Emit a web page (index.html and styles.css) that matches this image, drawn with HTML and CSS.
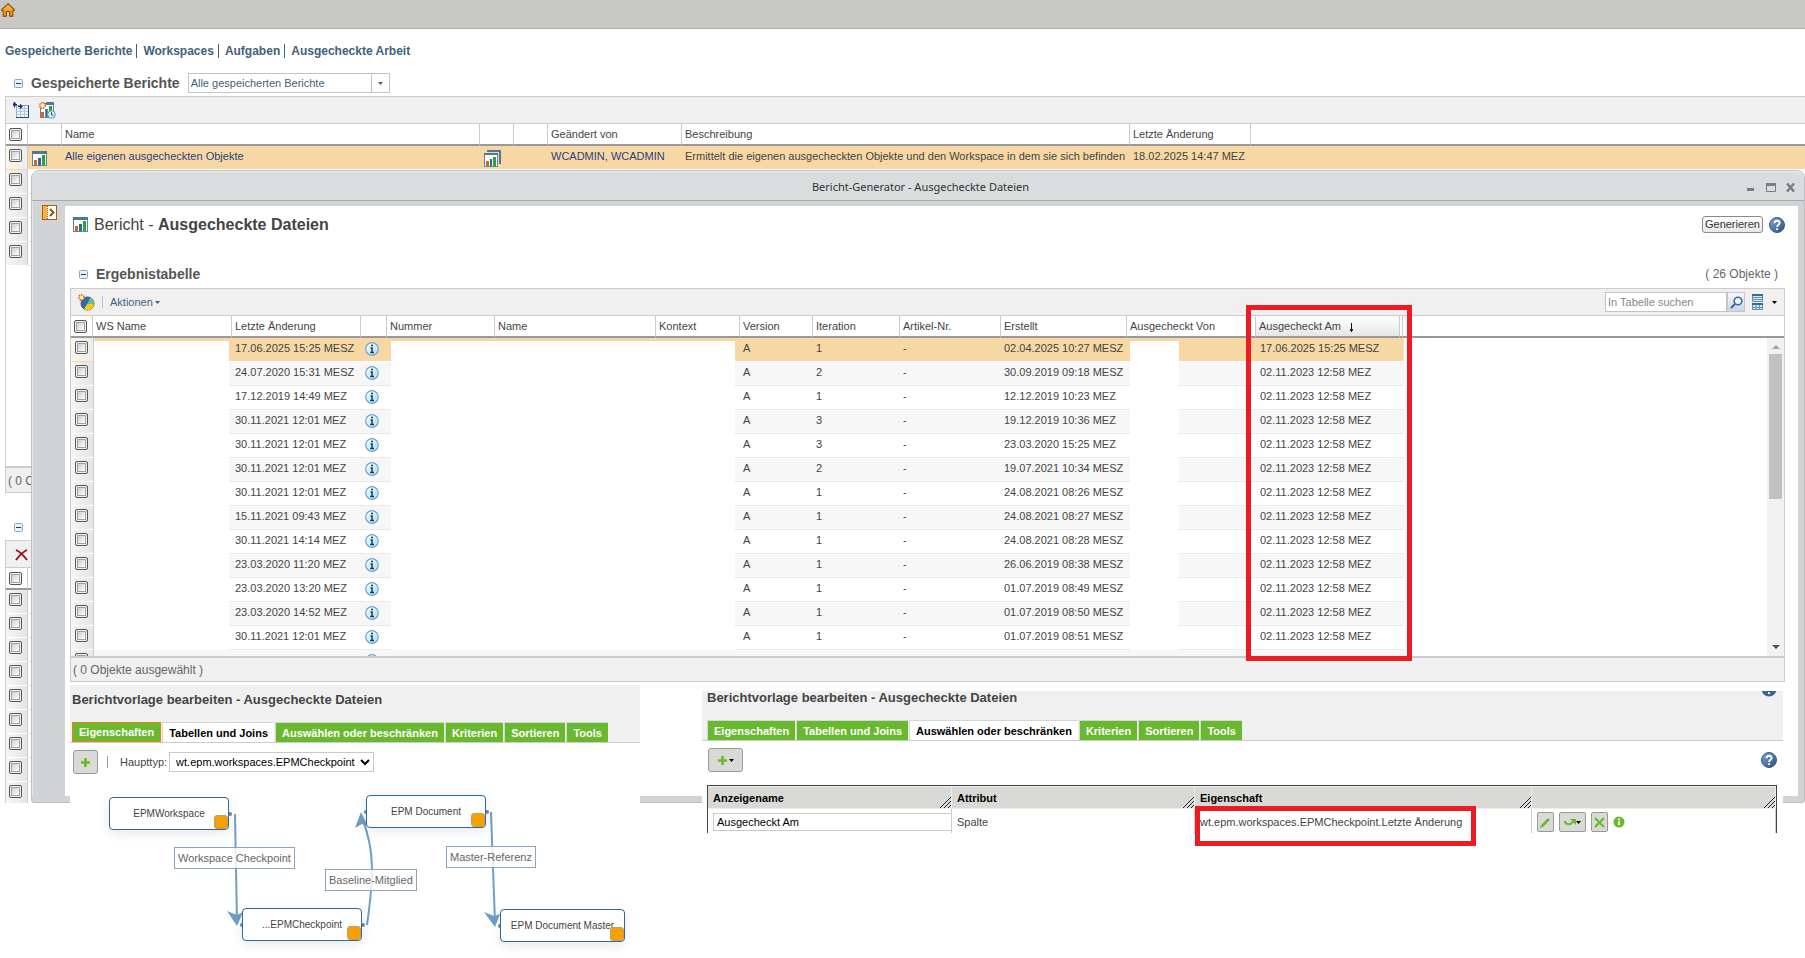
FILE: index.html
```html
<!DOCTYPE html>
<html lang="de">
<head>
    <meta charset="UTF-8">
    <meta name="viewport" content="width=device-width, initial-scale=1.0">
    <title>Bericht-Generator - Ausgecheckte Dateien</title>
    <link rel="stylesheet" href="styles.css">
</head>
<body>
    <!-- shared icons -->
    <svg class="sprite" aria-hidden="true">
        <defs>
            <linearGradient id="blue-ball" x1="0" y1="0" x2="1" y2="1">
                <stop offset="0" stop-color="#7fa8cf"/>
                <stop offset="1" stop-color="#2a4f80"/>
            </linearGradient>
            <linearGradient id="pale-ball" x1="0" y1="0" x2="1" y2="1">
                <stop offset="0" stop-color="#ffffff"/>
                <stop offset="1" stop-color="#a9dcfa"/>
            </linearGradient>
            <linearGradient id="home-fill" x1="0" y1="0" x2="0" y2="1">
                <stop offset="0" stop-color="#ffc04a"/>
                <stop offset="1" stop-color="#f08a10"/>
            </linearGradient>
        </defs>
        <symbol id="i-report" viewBox="0 0 15 15">
            <rect x=".5" y=".5" width="14" height="14" fill="#fff" stroke="#5f87a3"/>
            <rect width="15" height="3" fill="#4d7896"/>
            <rect x="2" y="9" width="3" height="5" fill="#d2691e"/>
            <rect x="6" y="7" width="3" height="7" fill="#2b6a94"/>
            <rect x="10" y="4" width="3" height="10" fill="#25a82b"/>
        </symbol>
        <symbol id="i-reports" viewBox="0 0 17 17">
            <path d="M3 1h13v13" fill="none" stroke="#4d7896" stroke-width="2"/>
            <rect x=".5" y="3.500" width="13" height="13" fill="#fff" stroke="#5f87a3"/>
            <rect y="3" width="14" height="2" fill="#4d7896"/>
            <rect x="2" y="11" width="3" height="5" fill="#d2691e"/>
            <rect x="6" y="9" width="2" height="7" fill="#2b6a94"/>
            <rect x="9" y="7" width="3" height="9" fill="#25a82b"/>
        </symbol>
        <symbol id="i-minus" viewBox="0 0 9 9">
            <rect x=".5" y=".5" width="8" height="8" rx="1" fill="#e6f3fc" stroke="#82aac8"/>
            <path d="M2 4.500h5" stroke="#1d3f5e"/>
        </symbol>
        <symbol id="i-help" viewBox="0 0 16 16">
            <circle cx="8" cy="8" r="7.500" fill="url(#blue-ball)" stroke="#34588a"/>
            <path d="M5.500 6.200C5.500 3 10.600 3 10.600 6c0 1.800-2.500 1.900-2.500 4M8.100 11.300v1.800" fill="none" stroke="#fff" stroke-width="1.900"/>
        </symbol>
        <symbol id="i-info" viewBox="0 0 14 14">
            <circle cx="7" cy="7" r="6.300" fill="url(#pale-ball)" stroke="#6ea6cc" stroke-width="1.200"/>
            <path d="M6 3.500h2M5.500 6H7v4.500M5.200 10.500h3.800" fill="none" stroke="#133a5c" stroke-width="1.500"/>
        </symbol>
        <symbol id="i-down" viewBox="0 0 5 3">
            <path d="M0 0h5L2.500 3z" fill="currentColor"/>
        </symbol>
        <symbol id="i-plus" viewBox="0 0 9 9">
            <path d="M4.500 0v9M0 4.500h9" stroke="#69b92e" stroke-width="2.600"/>
        </symbol>
        <symbol id="i-grip" viewBox="0 0 11 11">
            <path d="M0 11L11 0M4 11l7-7M8 11l3-3" stroke="#222" fill="none"/>
        </symbol>
    </svg>

    <header class="topbar">
        <a href="#" class="home" aria-label="Startseite">
            <svg width="14" height="14" viewBox="0 0 14 14"><path d="M7 .8L.8 6.500v1.300h1.400v5.500h3.100V8.500h3.400v4.800h3.100V7.800h1.400V6.500z" fill="url(#home-fill)" stroke="#8a4a08" stroke-width="1.100"/></svg>
        </a>
    </header>

    <main class="page">
        <nav class="links">
            <a href="#">Gespeicherte Berichte</a>
            <a href="#">Workspaces</a>
            <a href="#">Aufgaben</a>
            <a href="#">Ausgecheckte Arbeit</a>
        </nav>

        <div class="section-head">
            <svg class="minus"><use href="#i-minus"/></svg>
            <h2>Gespeicherte Berichte</h2>
            <div class="combo">
                <select aria-label="Ansicht">
                    <option>Alle gespeicherten Berichte</option>
                </select>
                <span class="combo-arrow"><svg class="down"><use href="#i-down"/></svg></span>
            </div>
        </div>

        <section class="list">
            <div class="toolbar">
                <button class="icon-btn" aria-label="Aktualisieren">
                    <svg width="16" height="16" viewBox="0 0 16 16">
                        <rect x="3.500" y="3.500" width="12" height="12" fill="#eef4fc" stroke="#8aa4c8"/>
                        <path d="M3 6.500h12M3 9.500h12M3 12.500h12M7.500 4v11M11.500 4v11" stroke="#b4c8e2"/>
                        <path d="M4 2.500H1.500v3M0 3.500l1.500-3 1.500 3M5 4.500h3.500M7 2.500l2 2-2 2" stroke="#14246e" stroke-width="1.200" fill="none"/>
                        <path d="M15.500 3v13M3 15.500h13" stroke="#2d4a78"/>
                    </svg>
                </button>
                <button class="icon-btn" aria-label="Neuer Bericht">
                    <svg width="17" height="17" viewBox="0 0 17 17">
                        <rect x="1.500" y="1.500" width="13" height="14" fill="#fff" stroke="#5f87a3"/>
                        <path d="M7 1.500h8" stroke="#4d7896" stroke-width="3"/>
                        <path d="M3.500 10v5" stroke="#d2691e" stroke-width="3"/>
                        <path d="M7.500 7v8" stroke="#2b6a94" stroke-width="2.500"/>
                        <path d="M11.500 4v7" stroke="#25a82b" stroke-width="3"/>
                        <circle cx="3.500" cy="3.500" r="2.800" fill="#fff3b0" stroke="#e8501e" stroke-width="1.600" stroke-dasharray="1.300 1"/>
                        <circle cx="12.500" cy="12.500" r="3.800" fill="#d8eefa" stroke="#5f93b8"/>
                        <path d="M12.500 10v3h2" fill="none" stroke="#2b5a80"/>
                    </svg>
                </button>
            </div>
            <table class="grid report-grid">
                <colgroup><col class="w22"><col class="w34"><col class="w418"><col class="w34"><col class="w34"><col class="w134"><col class="w448"><col class="w121"><col></colgroup>
                <thead>
                    <tr>
                        <th><input type="checkbox" aria-label="Alle auswählen"></th>
                        <th></th>
                        <th>Name</th>
                        <th></th>
                        <th></th>
                        <th>Geändert von</th>
                        <th>Beschreibung</th>
                        <th>Letzte Änderung</th>
                        <th></th>
                    </tr>
                </thead>
                <tbody>
                    <tr class="selected">
                        <td class="check"><input type="checkbox" aria-label="Zeile auswählen"></td>
                        <td class="icon"><svg width="15" height="15"><use href="#i-report"/></svg></td>
                        <td><a href="#">Alle eigenen ausgecheckten Objekte</a></td>
                        <td class="icon"><svg width="17" height="17"><use href="#i-reports"/></svg></td>
                        <td></td>
                        <td><a href="#">WCADMIN, WCADMIN</a></td>
                        <td>Ermittelt die eigenen ausgecheckten Objekte und den Workspace in dem sie sich befinden</td>
                        <td>18.02.2025 14:47 MEZ</td>
                        <td></td>
                    </tr>
                    <tr><td class="check"><input type="checkbox" aria-label="Zeile auswählen"></td><td colspan="8"></td></tr>
                    <tr><td class="check"><input type="checkbox" aria-label="Zeile auswählen"></td><td colspan="8"></td></tr>
                    <tr><td class="check"><input type="checkbox" aria-label="Zeile auswählen"></td><td colspan="8"></td></tr>
                    <tr><td class="check"><input type="checkbox" aria-label="Zeile auswählen"></td><td colspan="8"></td></tr>
                </tbody>
            </table>
            <div class="list-space"></div>
            <div class="list-foot">( 0 O</div>
        </section>

        <div class="section-head second">
            <svg class="minus"><use href="#i-minus"/></svg>
        </div>

        <section class="list">
            <div class="toolbar delete-bar">
                <button class="icon-btn" aria-label="Löschen">
                    <svg width="14" height="12" viewBox="0 0 14 12"><path d="M1 1c4 2 8 6 11 10M12 1C8 3 4 7 1 11" stroke="#9a0a0a" stroke-width="1.800" fill="none"/></svg>
                </button>
            </div>
            <div class="clipped">
                <table class="grid">
                    <colgroup><col class="w22"><col></colgroup>
                    <thead>
                        <tr><th><input type="checkbox" aria-label="Alle auswählen"></th><th></th></tr>
                    </thead>
                    <tbody id="work-rows"></tbody>
                </table>
            </div>
        </section>
    </main>

    <section class="window">
        <header class="window-bar">
            <h1>Bericht-Generator - Ausgecheckte Dateien</h1>
            <div class="window-btns">
                <button class="icon-btn" aria-label="Minimieren"><svg width="10" height="9" viewBox="0 0 10 9"><path d="M1 6.500h7" stroke="#7a7c80" stroke-width="3"/></svg></button>
                <button class="icon-btn" aria-label="Maximieren"><svg width="10" height="9" viewBox="0 0 10 9"><path d="M.5 1v7.500h9V1" fill="none" stroke="#7a7c80"/><path d="M0 1.500h10" stroke="#7a7c80" stroke-width="3"/></svg></button>
                <button class="icon-btn" aria-label="Schließen"><svg width="9" height="9" viewBox="0 0 9 9"><path d="M1 .5l7 8M8 .5l-7 8" stroke="#7a7c80" stroke-width="2.400"/></svg></button>
            </div>
        </header>

        <div class="window-body">
            <aside class="rail">
                <button class="icon-btn" aria-label="Navigator öffnen">
                    <svg width="15" height="15" viewBox="0 0 15 15">
                        <rect x=".5" y=".5" width="14" height="14" fill="#fff" stroke="#a85a10"/>
                        <rect x="1" y="1" width="4" height="13" fill="#fbb040"/>
                        <path d="M5.500 1v13" stroke="#a85a10" stroke-dasharray="1 1"/>
                        <path d="M8 4l3.500 3.500L8 11" fill="none" stroke="#8a4a08" stroke-width="1.800"/>
                    </svg>
                </button>
            </aside>

            <div class="content">
                <div class="content-head">
                    <svg width="15" height="15"><use href="#i-report"/></svg>
                    <h2>Bericht - <b>Ausgecheckte Dateien</b></h2>
                    <button class="generate">Generieren</button>
                    <svg width="16" height="16"><use href="#i-help"/></svg>
                </div>

                <div class="result-head">
                    <svg class="minus"><use href="#i-minus"/></svg>
                    <h3>Ergebnistabelle</h3>
                    <span class="count">( 26 Objekte )</span>
                </div>

                <div class="result">
                    <div class="toolbar">
                        <button class="icon-btn" aria-label="Diagramm">
                            <svg width="17" height="17" viewBox="0 0 17 17">
                                <circle cx="9.500" cy="9.500" r="6.500" fill="#2a68b8" stroke="#4a5a50"/>
                                <path d="M9.500 9.500L12 3.500a6.500 6.500 0 0 1 4 6z" fill="#5cc49a"/>
                                <path d="M9.500 9.500H16a6.500 6.500 0 0 1-10 5.500z" fill="#f2cc10"/>
                                <circle cx="3.500" cy="3.500" r="2.600" fill="#fff3b0" stroke="#e0501e" stroke-width="1.600" stroke-dasharray="1.300 1"/>
                            </svg>
                        </button>
                        <span class="sep"></span>
                        <button class="menu">Aktionen<svg class="down"><use href="#i-down"/></svg></button>
                        <div class="search">
                            <input type="text" placeholder="In Tabelle suchen" aria-label="In Tabelle suchen">
                            <button aria-label="Suchen"><svg width="13" height="13" viewBox="0 0 13 13"><circle cx="8" cy="5" r="3.800" fill="#f4f9ff" stroke="#3c68a8" stroke-width="1.600"/><path d="M5 8L1 12" stroke="#3c68a8" stroke-width="2.200"/></svg></button>
                        </div>
                        <button class="view-btn" aria-label="Tabellenansicht">
                            <svg width="11" height="16" viewBox="0 0 11 16">
                                <path d="M.5 1v6.500h10V1M.5 3.500h10M.5 5.500h10M.5 10v5.500h10V10M4 10v5.500M7.500 10v5.500M.5 13.500h10" fill="#d5ebf8" stroke="#5b8fb5"/>
                                <path d="M0 1h11M0 10h11" stroke="#3d6a8c" stroke-width="2"/>
                            </svg>
                            <svg class="down"><use href="#i-down"/></svg>
                        </button>
                    </div>

                    <table class="grid">
                        <colgroup><col class="w22"><col class="w139"><col class="w129"><col class="w26"><col class="w108"><col class="w161"><col class="w84"><col class="w73"><col class="w87"><col class="w101"><col class="w126"><col class="w129"><col class="w144"><col class="w3"><col></colgroup>
                        <thead>
                            <tr>
                                <th><input type="checkbox" aria-label="Alle auswählen"></th>
                                <th>WS Name</th>
                                <th>Letzte Änderung</th>
                                <th></th>
                                <th>Nummer</th>
                                <th>Name</th>
                                <th>Kontext</th>
                                <th>Version</th>
                                <th>Iteration</th>
                                <th>Artikel-Nr.</th>
                                <th>Erstellt</th>
                                <th>Ausgecheckt Von</th>
                                <th class="sorted">Ausgecheckt Am<svg width="5" height="9" viewBox="0 0 5 9"><path d="M2.500 0v9" stroke="#111"/><path d="M1 6h3v1L2.500 9 1 7z" fill="#111"/></svg></th>
                                <th></th>
                                <th></th>
                            </tr>
                        </thead>
                    </table>

                    <div class="viewport">
                        <table class="grid result-grid">
                            <colgroup><col class="w23"><col class="w135"><col class="w132"><col class="w30"><col class="w344"><col class="w75"><col class="w87"><col class="w101"><col class="w132"><col class="w49"><col class="w75"><col class="w150"><col></colgroup>
                            <tbody id="result-rows"></tbody>
                        </table>
                        <div class="scrollbar">
                            <svg width="8" height="4" viewBox="0 0 8 4"><path d="M0 4h8L4 0z" fill="#a3a3a3"/></svg>
                            <span class="thumb"></span>
                            <svg width="8" height="4" viewBox="0 0 8 4"><path d="M0 0h8L4 4z" fill="#505050"/></svg>
                        </div>
                    </div>
                    <div class="result-foot">( 0 Objekte ausgewählt )</div>
                </div>

                <div class="panels">
                    <section class="panel joins">
                        <div class="panel-head">
                            <h3>Berichtvorlage bearbeiten - Ausgecheckte Dateien</h3>
                            <div class="tabs">
                                <button class="focus">Eigenschaften</button>
                                <button class="active">Tabellen und Joins</button>
                                <button>Auswählen oder beschränken</button>
                                <button>Kriterien</button>
                                <button>Sortieren</button>
                                <button>Tools</button>
                            </div>
                        </div>
                        <div class="panel-tools">
                            <button class="add" aria-label="Hinzufügen"><svg width="9" height="9"><use href="#i-plus"/></svg></button>
                            <span class="sep"></span>
                            <label for="main-type">Haupttyp:</label>
                            <select id="main-type">
                                <option>wt.epm.workspaces.EPMCheckpoint</option>
                            </select>
                        </div>
                        <div class="canvas">
                            <svg class="edges" width="570" height="170">
                                <g fill="none" stroke="#6f9fc6" stroke-width="2">
                                    <path d="M165 32L167 140"/>
                                    <path d="M297 143C303 100 306 70 292 36"/>
                                    <path d="M421 30L425 141"/>
                                </g>
                                <g fill="#6f9fc6">
                                    <path d="M167 144L157 129l10 4 6-3z"/>
                                    <path d="M291 30l-6 16 7-4 6 2z"/>
                                    <path d="M425 145l-11-15 10 4 6-2z"/>
                                </g>
                                <g fill="#7b8792">
                                    <circle cx="160" cy="32" r="2"/>
                                    <circle cx="172" cy="143" r="2"/>
                                    <circle cx="293" cy="143" r="2"/>
                                    <circle cx="296" cy="30" r="2"/>
                                    <circle cx="417" cy="30" r="2"/>
                                    <circle cx="430" cy="144" r="2"/>
                                </g>
                            </svg>
                            <div class="node workspace">EPMWorkspace</div>
                            <div class="node document">EPM Document</div>
                            <div class="node checkpoint">...EPMCheckpoint</div>
                            <div class="node master">EPM Document Master</div>
                            <div class="join ws-cp">Workspace Checkpoint</div>
                            <div class="join base">Baseline-Mitglied</div>
                            <div class="join ref">Master-Referenz</div>
                        </div>
                    </section>

                    <section class="panel fields">
                        <div class="panel-head">
                            <div class="panel-title">
                                <h3>Berichtvorlage bearbeiten - Ausgecheckte Dateien</h3>
                                <svg class="help-cut" width="16" height="6" viewBox="0 10 16 6"><circle cx="8" cy="8" r="7.500" fill="#3c6296"/><path d="M8 11.300v1.800" stroke="#fff" stroke-width="2"/></svg>
                            </div>
                            <div class="tabs">
                                <button>Eigenschaften</button>
                                <button>Tabellen und Joins</button>
                                <button class="active">Auswählen oder beschränken</button>
                                <button>Kriterien</button>
                                <button>Sortieren</button>
                                <button>Tools</button>
                            </div>
                        </div>
                        <div class="panel-tools">
                            <button class="add wide" aria-label="Hinzufügen"><svg width="9" height="9"><use href="#i-plus"/></svg><svg class="down"><use href="#i-down"/></svg></button>
                            <svg class="help" width="16" height="16"><use href="#i-help"/></svg>
                        </div>
                        <table class="attr">
                            <colgroup><col class="w244"><col class="w243"><col class="w337"><col></colgroup>
                            <thead>
                                <tr>
                                    <th>Anzeigename<svg class="grip"><use href="#i-grip"/></svg></th>
                                    <th>Attribut<svg class="grip"><use href="#i-grip"/></svg></th>
                                    <th>Eigenschaft<svg class="grip"><use href="#i-grip"/></svg></th>
                                    <th><svg class="grip"><use href="#i-grip"/></svg></th>
                                </tr>
                            </thead>
                            <tbody>
                                <tr>
                                    <td class="field"><input type="text" value="Ausgecheckt Am" aria-label="Anzeigename"></td>
                                    <td>Spalte</td>
                                    <td>wt.epm.workspaces.EPMCheckpoint.Letzte Änderung</td>
                                    <td>
                                        <div class="row-tools">
                                            <button aria-label="Bearbeiten"><svg width="11" height="11" viewBox="0 0 11 11"><path d="M2 9l7-7" stroke="#69b92e" stroke-width="2.600"/><path d="M0 11l1-3 2 2z" fill="#69b92e"/></svg></button>
                                            <button class="move" aria-label="Ersetzen"><svg width="12" height="8" viewBox="0 0 12 8"><path d="M1 3c0 4 6 4 8 1" fill="none" stroke="#69b92e" stroke-width="2"/><path d="M6 1h6v6z" fill="#69b92e"/></svg><svg class="down"><use href="#i-down"/></svg></button>
                                            <button aria-label="Entfernen"><svg width="11" height="11" viewBox="0 0 11 11"><path d="M1 1l9 9M10 1l-9 9" stroke="#69b92e" stroke-width="2.200"/></svg></button>
                                            <svg width="12" height="12" viewBox="0 0 12 12"><circle cx="6" cy="6" r="5.500" fill="#69b92e"/><path d="M6 2.500v1.500M6 5v4" stroke="#fff" stroke-width="1.800"/></svg>
                                        </div>
                                    </td>
                                </tr>
                            </tbody>
                        </table>
                    </section>
                </div>
            </div>
        </div>
    </section>

    <!-- red markers -->
    <div class="marker marker-column"></div>
    <div class="marker marker-property"></div>

    <script>
        const check = '<td class="check"><input type="checkbox" aria-label="Zeile auswählen"></td>';
        const info = '<svg width="14" height="14"><use href="#i-info"/></svg>';

        // changed, iteration, created
        const rows = [
            ['17.06.2025 15:25 MESZ', 1, '02.04.2025 10:27 MESZ', '17.06.2025 15:25 MESZ'],
            ['24.07.2020 15:31 MESZ', 2, '30.09.2019 09:18 MESZ'],
            ['17.12.2019 14:49 MEZ', 1, '12.12.2019 10:23 MEZ'],
            ['30.11.2021 12:01 MEZ', 3, '19.12.2019 10:36 MEZ'],
            ['30.11.2021 12:01 MEZ', 3, '23.03.2020 15:25 MEZ'],
            ['30.11.2021 12:01 MEZ', 2, '19.07.2021 10:34 MESZ'],
            ['30.11.2021 12:01 MEZ', 1, '24.08.2021 08:26 MESZ'],
            ['15.11.2021 09:43 MEZ', 1, '24.08.2021 08:27 MESZ'],
            ['30.11.2021 14:14 MEZ', 1, '24.08.2021 08:28 MESZ'],
            ['23.03.2020 11:20 MEZ', 1, '26.06.2019 08:38 MESZ'],
            ['23.03.2020 13:20 MEZ', 1, '01.07.2019 08:49 MESZ'],
            ['23.03.2020 14:52 MEZ', 1, '01.07.2019 08:50 MESZ'],
            ['30.11.2021 12:01 MEZ', 1, '01.07.2019 08:51 MESZ']
        ];

        document.getElementById('result-rows').innerHTML = rows.map(([changed, iteration, created, out], i) => `
            <tr${i === 0 ? ' class="selected"' : ''}>
                ${check}<td class="blank"></td><td>${changed}</td><td class="info">${info}</td><td class="blank"></td>
                <td class="version">A</td><td>${iteration}</td><td>-</td><td>${created}</td>
                <td class="blank"></td><td></td><td>${out || '02.11.2023 12:58 MEZ'}</td><td class="rest"></td>
            </tr>`).join('') + `<tr>${check}<td colspan="2"></td><td class="info">${info}</td><td colspan="8"></td><td class="rest"></td></tr>`;

        document.getElementById('work-rows').innerHTML = `<tr>${check}<td></td></tr>`.repeat(9);
    </script>
</body>
</html>
```

FILE: styles.css
```css
* {
    margin: 0;
    padding: 0;
    box-sizing: border-box;
}

body {
    position: relative;
    min-height: 100vh;
    background: #fff;
    color: #444;
    font-family: 'Liberation Sans', Arial, sans-serif;
    font-size: 11px;
    line-height: 14px;
    overflow: hidden;
}

a {
    color: #2c3f7c;
    text-decoration: none;
}

button, input, select {
    font: inherit;
    color: inherit;
}

svg {
    display: block;
    flex: none;
}

.sprite {
    position: absolute;
    width: 0;
    height: 0;
}

.icon-btn {
    background: none;
    border: 0;
}

.minus {
    width: 9px;
    height: 9px;
}

.down {
    width: 5px;
    height: 3px;
}

/* page behind the window */
.topbar {
    height: 29px;
    padding: 3px 1px;
    background: #c8c8c5;
    border-bottom: 1px solid #adadad;
}

.home {
    display: inline-block;
}

.page {
    padding-left: 5px;
}

.links {
    display: flex;
    padding-top: 15px;
    font-size: 12px;
    font-weight: bold;
}

.links a {
    color: #42617a;
    padding: 0 4px 0 6px;
    border-left: 1px solid #42617a;
}

.links a:first-child {
    padding: 0 4px 0 0;
    border-left: 0;
}

.section-head {
    display: flex;
    align-items: center;
    gap: 8px;
    height: 38px;
    padding: 12px 0 0 9px;
}

.section-head.second {
    height: 47px;
    padding-top: 21px;
}

h2, h3 {
    color: #555;
    font-size: 14px;
}

.combo {
    position: relative;
    width: 202px;
    height: 20px;
}

.combo select {
    width: 100%;
    height: 100%;
    padding-left: 2px;
    appearance: none;
    background: #fff;
    border: 1px solid #c4c4c4;
    color: #42617a;
}

.combo-arrow {
    position: absolute;
    top: 1px;
    right: 1px;
    display: grid;
    place-items: center;
    width: 18px;
    height: 18px;
    border-left: 1px solid #c4c4c4;
    color: #42617a;
    pointer-events: none;
}

.list, .result {
    border-left: 1px solid #ccc;
}

.toolbar {
    display: flex;
    align-items: center;
    gap: 10px;
    height: 28px;
    padding: 0 7px;
    background: #f0f0f0;
    border: solid #ccc;
    border-width: 1px 0;
}

.delete-bar {
    padding: 2px 9px 0;
}

.list-space {
    height: 200px;
}

.list-foot {
    height: 27px;
    padding: 6px 2px;
    background: #f0f0f0;
    border-top: 2px solid #ccc;
    border-bottom: 1px solid #ccc;
    color: #666;
    font-size: 12px;
}

.clipped {
    height: 235px;
    overflow: hidden;
}

/* tables */
table {
    width: 100%;
    table-layout: fixed;
    border-collapse: separate;
    border-spacing: 0;
}

.w3 { width: 3px; }
.w22 { width: 22px; }
.w23 { width: 23px; }
.w26 { width: 26px; }
.w30 { width: 30px; }
.w34 { width: 34px; }
.w49 { width: 49px; }
.w73 { width: 73px; }
.w75 { width: 75px; }
.w84 { width: 84px; }
.w87 { width: 87px; }
.w101 { width: 101px; }
.w108 { width: 108px; }
.w121 { width: 121px; }
.w126 { width: 126px; }
.w129 { width: 129px; }
.w132 { width: 132px; }
.w134 { width: 134px; }
.w135 { width: 135px; }
.w139 { width: 139px; }
.w144 { width: 144px; }
.w150 { width: 150px; }
.w161 { width: 161px; }
.w243 { width: 243px; }
.w244 { width: 244px; }
.w337 { width: 337px; }
.w344 { width: 344px; }
.w418 { width: 418px; }
.w448 { width: 448px; }

.grid th {
    height: 22px;
    padding: 0 3px;
    border-right: 1px solid #ccc;
    border-bottom: 2px solid #999;
    font-weight: normal;
    text-align: left;
    white-space: nowrap;
}

.grid th:last-child {
    border-right: 0;
}

.grid .sorted {
    background: linear-gradient(#fff, #e6e6e6);
}

.sorted svg {
    display: inline-block;
    margin-left: 8px;
    vertical-align: -2px;
}

.grid td {
    height: 24px;
    padding: 0 3px 4px;
    border-bottom: 1px solid #e9e9e9;
    white-space: nowrap;
}

.grid .check {
    background: linear-gradient(90deg, #f6f6f6, #e4e5e8);
    border-right: 1px solid #ccc;
    border-bottom-color: #fff;
}

.grid .selected td {
    background: #f7d8a4;
    border-bottom-color: #fff;
}

.grid .selected .check {
    background: linear-gradient(90deg, #fdf6ea, #ececee);
    border-bottom-color: #f7d8a4;
}

.grid .icon {
    padding: 2px 4px 0;
}

input[type="checkbox"] {
    display: block;
    width: 13px;
    height: 13px;
    appearance: none;
    background: linear-gradient(135deg, #c0c0c0, #fff 80%);
    border: 1px solid #555;
    border-radius: 2px;
    box-shadow: inset 0 0 0 1px #f4f4f4, inset 0 0 0 2px #a0a0a0;
}

/* window */
.window {
    position: absolute;
    top: 170px;
    left: 31px;
    right: 0;
    height: 633px;
    background: #d1d3d5;
    border: 1px solid #bcbec0;
    border-radius: 8px 8px 3px 3px;
}

.window-bar {
    display: flex;
    align-items: center;
    height: 30px;
    padding: 2px 9px 0;
    background: #d9dddd;
    border-top: 1px solid #f0f2f2;
    border-bottom: 1px solid #a9abad;
    border-radius: 7px 7px 0 0;
}

.window-bar h1 {
    flex: 1;
    padding-left: 54px;
    color: #333;
    font-family: 'Noto Sans', 'Open Sans', sans-serif;
    font-size: 11px;
    font-weight: normal;
    text-align: center;
}

.window-btns {
    display: flex;
    gap: 10px;
}

.window-body {
    display: flex;
    height: 595px;
    padding: 5px 6px 0 0;
}

.rail {
    width: 33px;
    margin-top: -5px;
    padding: 4px 10px;
    box-shadow: inset 7px 0 0 -6px #e4e6e8;
}

.content {
    flex: 1;
    min-width: 0;
    padding: 0 13px 0 5px;
    background: #fff;
}

.content-head {
    display: flex;
    align-items: center;
    gap: 6px;
    height: 36px;
    padding: 1px 0 0 3px;
}

.content-head h2 {
    flex: 1;
    color: #444;
    font-size: 16px;
    font-weight: normal;
}

.generate {
    height: 17px;
    padding: 0 2px;
    background: linear-gradient(#fff, #e8e8ea);
    border: 1px solid #8a8a8a;
    border-radius: 3px;
    color: #333;
    line-height: 13px;
}

.result-head {
    display: flex;
    align-items: center;
    gap: 8px;
    height: 46px;
    padding: 18px 7px 0 9px;
}

.result-head h3 {
    flex: 1;
}

.count {
    color: #666;
    font-size: 12px;
}

.result {
    border-right: 1px solid #ccc;
}

.result .toolbar {
    gap: 7px;
}

.sep {
    width: 1px;
    height: 12px;
    background: #a9c6ee;
}

.menu {
    display: flex;
    align-items: center;
    gap: 2px;
    background: none;
    border: 0;
    color: #42617a;
}

.search {
    display: flex;
    margin-left: auto;
}

.search input {
    width: 122px;
    height: 20px;
    padding: 0 2px;
    background: #fff;
    border: 1px solid #c4c4c4;
    outline: 0;
}

.search input::placeholder {
    color: #888;
}

.search button {
    display: grid;
    place-items: center;
    width: 18px;
    height: 20px;
    background: linear-gradient(#f6f8fb, #cfd3de);
    border: 1px solid #c0c6d8;
}

.view-btn {
    display: flex;
    align-items: center;
    gap: 9px;
    background: none;
    border: 0;
    color: #000;
}

.viewport {
    display: flex;
    height: 318px;
    overflow: hidden;
}

.result-grid {
    flex: 1;
    width: 0;
}

.result-grid td {
    padding-left: 6px;
}

.result-grid td.check {
    padding-left: 4px;
}

.result-grid tr:nth-child(even) td {
    background: #f7f7f7;
}

.result-grid tr:nth-child(even) td.check {
    background: linear-gradient(90deg, #f6f6f6, #e4e5e8);
}

.result-grid tr:nth-child(n) .blank {
    background: #fff;
    border-bottom-color: #fff;
}

.result-grid tr.selected .blank {
    background: linear-gradient(#f7d8a4 3px, #fff 3px);
}

.result-grid tr:nth-child(n) .rest {
    background: #fff;
    border-color: #fff;
}

.result-grid .info {
    padding: 0 4px 1px;
}

.result-grid .version {
    padding-left: 8px;
}

.scrollbar {
    display: flex;
    flex-direction: column;
    align-items: center;
    width: 17px;
    padding: 7px 0;
    background: #f1f1f1;
}

.scrollbar .thumb {
    width: 13px;
    height: 145px;
    margin: 5px 0 auto;
    background: #c1c1c1;
}

.result-foot {
    height: 26px;
    padding: 5px 2px;
    background: #f0f0f0;
    border-top: 2px solid #ccc;
    border-bottom: 1px solid #ccc;
    color: #666;
    font-size: 12px;
}

/* template editors */
.panels {
    display: flex;
    align-items: flex-start;
    gap: 62px;
    padding: 3px 2px 0 0;
}

.panel {
    background: #fff;
}

.joins {
    width: 570px;
}

.fields {
    flex: 1;
    min-width: 0;
    margin-top: 6px;
}

.panel-head {
    padding: 8px 0 0 2px;
    background: #f0f0f0;
    border-bottom: 1px solid #ccc;
}

.fields .panel-head {
    padding: 0 0 0 5px;
}

.panel-title {
    display: flex;
    justify-content: space-between;
    padding-right: 6px;
}

.panel-head h3 {
    color: #444;
    font-size: 13px;
}

.tabs {
    display: flex;
    gap: 1px;
    padding-top: 15px;
}

.tabs button {
    height: 20px;
    padding: 0 6px;
    background: #69b92e;
    border: 1px solid #d2d8d2;
    border-width: 1px 0 0 1px;
    color: #fff;
    font-weight: bold;
}

.tabs .focus {
    border: 1px solid #f08010;
}

.tabs .active {
    margin-bottom: -1px;
    background: #fff;
    color: #000;
}

.panel-tools {
    display: flex;
    align-items: center;
    padding: 7px 6px 8px 3px;
}

.fields .panel-tools {
    padding: 7px 6px 13px;
}

.add {
    display: flex;
    align-items: center;
    justify-content: center;
    gap: 2px;
    width: 25px;
    height: 24px;
    background: #d9dad5;
    border: 1px solid #999;
    border-radius: 3px;
    color: #000;
}

.add.wide {
    width: 35px;
}

.help {
    margin-left: auto;
}

.panel-tools .sep {
    margin: 0 12px 0 9px;
    background: #999;
}

#main-type {
    width: 205px;
    height: 20px;
    margin-left: 2px;
    padding-left: 2px;
    background: #fff;
    border: 1px solid #c8c8cc;
    color: #000;
}

.canvas {
    position: relative;
    height: 170px;
}

.edges {
    position: absolute;
    top: 0;
    left: 0;
}

.node {
    position: absolute;
    width: 120px;
    height: 33px;
    background: #fff;
    border: 1px solid #2e6a98;
    border-radius: 4px;
    box-shadow: 0 3px 12px rgba(0, 0, 0, 0.1);
    font-size: 10px;
    line-height: 32px;
    text-align: center;
}

.node::after {
    content: '';
    position: absolute;
    right: 0;
    bottom: 0;
    width: 12px;
    height: 12px;
    background: #f8a000;
    border: 1px solid #b8a070;
    border-radius: 3px;
}

.workspace { top: 15px; left: 39px; }
.document { top: 13px; left: 296px; }
.checkpoint { top: 126px; left: 172px; }
.master { top: 127px; left: 430px; width: 125px; }

.join {
    position: absolute;
    padding: 3px;
    background: rgba(255, 255, 255, 0.8);
    border: 1px solid #8aa4bc;
    color: #666;
}

.ws-cp { top: 65px; left: 104px; }
.base { top: 87px; left: 255px; }
.ref { top: 64px; left: 376px; }

.attr {
    width: auto;
    min-width: calc(100% - 11px);
    margin-left: 5px;
    border: 1px solid #444;
    border-bottom: 0;
}

.attr th {
    position: relative;
    height: 23px;
    padding: 0 5px;
    background: #d9dad5;
    border: solid #eee;
    border-width: 1px 1px 1px 0;
    color: #000;
    text-align: left;
}

.grip {
    position: absolute;
    right: 0;
    bottom: 0;
    width: 11px;
    height: 11px;
}

.attr td {
    height: 24px;
    padding: 2px 5px 0;
    border-right: 1px solid #ccc;
}

.attr .field {
    padding-right: 0;
}

.field input {
    display: block;
    width: 100%;
    height: 18px;
    padding: 0 3px;
    background: #fff;
    border: solid #ccc;
    border-width: 1px 0 1px 1px;
    color: #000;
}

.row-tools {
    display: flex;
    align-items: center;
    gap: 5px;
}

.row-tools button {
    display: flex;
    align-items: center;
    justify-content: center;
    width: 17px;
    height: 20px;
    background: #d9dad5;
    border: 1px solid #999;
    border-radius: 2px;
    color: #000;
}

.row-tools .move {
    width: 27px;
}

.marker {
    position: absolute;
    border: 5px solid #ed1c24;
    pointer-events: none;
}

.marker-column {
    top: 305px;
    left: 1246px;
    width: 166px;
    height: 356px;
}

.marker-property {
    top: 806px;
    left: 1195px;
    width: 281px;
    height: 40px;
}
```
